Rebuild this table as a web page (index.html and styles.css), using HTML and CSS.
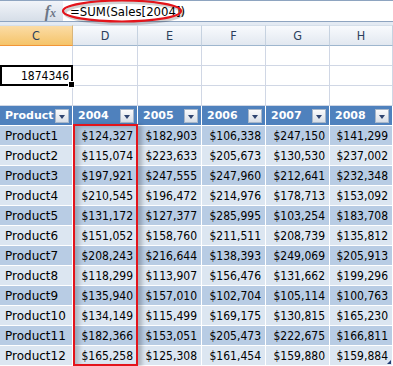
FILE: index.html
```html
<!DOCTYPE html>
<html>
<head>
<meta charset="utf-8">
<link rel="stylesheet" href="styles.css">
</head>
<body>
<div class="screen">
  <div class="fbar">
    <div class="fx-area"><span class="fx">f<span class="fx-x">x</span></span></div>
    <div class="formula">=SUM(Sales[2004])</div>
  </div>
  <div class="gap"></div>
  <div class="row colhead">
    <div class="ch active">C</div><div class="ch">D</div><div class="ch">E</div><div class="ch">F</div><div class="ch">G</div><div class="ch">H</div>
  </div>
  <div class="row"><div class="c"></div><div class="c"></div><div class="c"></div><div class="c"></div><div class="c"></div><div class="c"></div></div>
  <div class="row"><div class="c num selected">1874346</div><div class="c"></div><div class="c"></div><div class="c"></div><div class="c"></div><div class="c"></div></div>
  <div class="row"><div class="c"></div><div class="c"></div><div class="c"></div><div class="c"></div><div class="c"></div><div class="c"></div></div>
  <div class="row thead">
    <div class="t"><span>Product</span><span class="dd"></span></div>
    <div class="t"><span>2004</span><span class="dd"></span></div>
    <div class="t"><span>2005</span><span class="dd"></span></div>
    <div class="t"><span>2006</span><span class="dd"></span></div>
    <div class="t"><span>2007</span><span class="dd"></span></div>
    <div class="t"><span>2008</span><span class="dd"></span></div>
  </div>
  <div class="row odd"><div class="d name">Product1</div><div class="d">$124,327</div><div class="d">$182,903</div><div class="d">$106,338</div><div class="d">$247,150</div><div class="d">$141,299</div></div>
  <div class="row even"><div class="d name">Product2</div><div class="d">$115,074</div><div class="d">$223,633</div><div class="d">$205,673</div><div class="d">$130,530</div><div class="d">$237,002</div></div>
  <div class="row odd"><div class="d name">Product3</div><div class="d">$197,921</div><div class="d">$247,555</div><div class="d">$247,960</div><div class="d">$212,641</div><div class="d">$232,348</div></div>
  <div class="row even"><div class="d name">Product4</div><div class="d">$210,545</div><div class="d">$196,472</div><div class="d">$214,976</div><div class="d">$178,713</div><div class="d">$153,092</div></div>
  <div class="row odd"><div class="d name">Product5</div><div class="d">$131,172</div><div class="d">$127,377</div><div class="d">$285,995</div><div class="d">$103,254</div><div class="d">$183,708</div></div>
  <div class="row even"><div class="d name">Product6</div><div class="d">$151,052</div><div class="d">$158,760</div><div class="d">$211,511</div><div class="d">$208,739</div><div class="d">$135,812</div></div>
  <div class="row odd"><div class="d name">Product7</div><div class="d">$208,243</div><div class="d">$216,644</div><div class="d">$138,393</div><div class="d">$249,069</div><div class="d">$205,913</div></div>
  <div class="row even"><div class="d name">Product8</div><div class="d">$118,299</div><div class="d">$113,907</div><div class="d">$156,476</div><div class="d">$131,662</div><div class="d">$199,296</div></div>
  <div class="row odd"><div class="d name">Product9</div><div class="d">$135,940</div><div class="d">$157,010</div><div class="d">$102,704</div><div class="d">$105,114</div><div class="d">$100,763</div></div>
  <div class="row even"><div class="d name">Product10</div><div class="d">$134,149</div><div class="d">$115,499</div><div class="d">$169,175</div><div class="d">$130,815</div><div class="d">$165,230</div></div>
  <div class="row odd"><div class="d name">Product11</div><div class="d">$182,366</div><div class="d">$153,051</div><div class="d">$205,473</div><div class="d">$222,675</div><div class="d">$166,811</div></div>
  <div class="row even"><div class="d name">Product12</div><div class="d">$165,258</div><div class="d">$125,308</div><div class="d">$161,454</div><div class="d">$159,880</div><div class="d last">$159,884</div></div>

  <svg class="ellipse" width="140" height="28" viewBox="0 0 140 28">
    <ellipse cx="63" cy="14" rx="59" ry="10.5" fill="none" stroke="rgba(0,0,0,0.18)" stroke-width="3" transform="translate(2,2)"/>
    <ellipse cx="63" cy="14" rx="59" ry="10.5" fill="none" stroke="#e3141b" stroke-width="2.2"/>
  </svg>
  <div class="redbox"></div>
</div>
</body>
</html>
```

FILE: styles.css
```css
* { box-sizing: border-box; }
body {
  margin: 0;
  background: #fff;
  font-family: "DejaVu Sans", Verdana, sans-serif;
}
.screen {
  position: relative;
  width: 393px;
  height: 366px;
  overflow: hidden;
}
.fbar {
  display: flex;
  height: 22px;
  border-top: 1px solid #8ea4c0;
  border-bottom: 1px solid #8ea4c0;
}
.fx-area {
  width: 63px;
  background: linear-gradient(#f1f4f9, #d6dee8);
  display: flex;
  justify-content: flex-end;
  align-items: center;
  padding-right: 7px;
  padding-top: 2px;
}
.fx {
  font-family: "Liberation Serif", serif;
  font-style: italic;
  font-weight: bold;
  font-size: 16px;
  color: #6c7686;
  line-height: 1;
}
.fx-x { font-size: 12px; }
.formula {
  flex: 1;
  background: #fff;
  font-family: "DejaVu Sans Condensed", "DejaVu Sans", sans-serif;
  font-stretch: condensed;
  font-size: 13px;
  color: #000;
  padding-left: 7px;
  display: flex;
  align-items: center;
}
.gap {
  height: 3px;
  background: #e3eaf3;
}
.row {
  display: grid;
  grid-template-columns: 73px 65px 64px 64px 64px 63px;
  height: 20px;
}
.colhead { height: 21px; }
.ch {
  background: linear-gradient(#f8fafd, #e2e8f0);
  border-right: 1px solid #c6d2e0;
  border-bottom: 1px solid #9eb6ce;
  border-top: 1px solid #d5dfea;
  font-family: "DejaVu Sans Condensed", "DejaVu Sans", sans-serif;
  font-stretch: condensed;
  font-size: 12.5px;
  color: #2b3f5c;
  display: flex;
  align-items: center;
  justify-content: center;
}
.ch.active {
  background: linear-gradient(#fbdca6, #f5c46a);
  border-bottom-color: #f29537;
  border-right-color: #d9b57a;
}
.c {
  border-right: 1px solid #d0d7e5;
  border-bottom: 1px solid #d0d7e5;
  font-family: "DejaVu Sans Condensed", "DejaVu Sans", sans-serif;
  font-stretch: condensed;
  font-size: 12px;
  display: flex;
  align-items: center;
}
.num { justify-content: flex-end; padding-right: 3px; }
.selected { position: relative; }
.selected::after {
  content: "";
  position: absolute;
  left: 0;
  top: -1px;
  right: -1px;
  bottom: -1px;
  border: 2px solid #000;
}
.selected::before {
  content: "";
  position: absolute;
  right: -3px;
  bottom: -3px;
  width: 5px;
  height: 5px;
  background: #000;
  border: 1px solid #fff;
  z-index: 2;
}
.t {
  background: #4f81bd;
  border-right: 1px solid #fff;
  border-bottom: 1px solid #fff;
  color: #fff;
  font-weight: bold;
  font-size: 11px;
  display: flex;
  align-items: center;
  justify-content: space-between;
  padding: 0 3px 0 5px;
}
.dd {
  width: 14px;
  height: 14px;
  border: 1px solid #a7b6c9;
  background: linear-gradient(#fbfbfc, #d8dee7);
  position: relative;
}
.dd::after {
  content: "";
  position: absolute;
  left: 3px;
  top: 5px;
  border-left: 3.5px solid transparent;
  border-right: 3.5px solid transparent;
  border-top: 4px solid #2f4470;
}
.d {
  border-right: 1px solid #fff;
  border-bottom: 1px solid #fff;
  font-family: "DejaVu Sans Condensed", "DejaVu Sans", sans-serif;
  font-stretch: condensed;
  font-size: 12px;
  color: #000;
  display: flex;
  align-items: center;
  justify-content: flex-end;
  padding-right: 4px;
}
.d.name {
  justify-content: flex-start;
  padding-left: 5px;
  font-family: "DejaVu Sans", sans-serif;
  font-stretch: normal;
}
.odd .d { background: #b8cce4; }
.even .d { background: #dce6f1; }
.d.last { position: relative; }
.d.last::after {
  content: "";
  position: absolute;
  right: 1px;
  bottom: 1px;
  width: 0;
  height: 0;
  border-left: 4px solid transparent;
  border-bottom: 4px solid #1f3b73;
}
.ellipse {
  position: absolute;
  left: 59px;
  top: -3px;
}
.redbox {
  position: absolute;
  left: 73px;
  top: 124px;
  width: 65px;
  height: 242px;
  border: 2px solid #e3141b;
  box-shadow: 4px 1px 4px rgba(0,0,0,0.22), inset 5px 2px 5px -1px rgba(0,0,0,0.2);
}
```
